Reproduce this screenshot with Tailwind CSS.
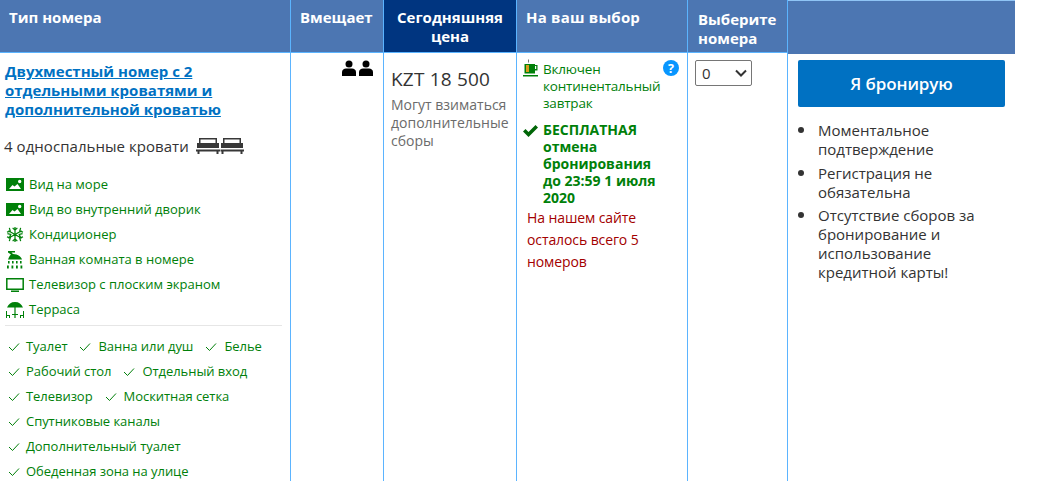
<!DOCTYPE html>
<html lang="ru">
<head>
  <meta charset="UTF-8" />
  <title>Выбор номера</title>
  <script src="https://cdn.jsdelivr.net/npm/@tailwindcss/browser@4"></script>
</head>
<body class="bg-white h-[481px] w-[1041px] overflow-hidden font-['Open_Sans','Noto_Sans',sans-serif] text-[#333]">
  <div class="w-[1015px] h-[481px] grid grid-cols-[291px_93px_133px_171px_100px_227px] grid-rows-[53px_428px]">

    <!-- Header -->
    <div class="bg-[#4c76b2] border-r border-b border-[#5bb4ff] text-white font-bold text-[15px] leading-[19px] pl-[9px] pt-[8px]">Тип номера</div>
    <div class="bg-[#4c76b2] border-r border-b border-[#5bb4ff] text-white font-bold text-[15px] leading-[19px] pl-[9px] pt-[8px]">Вмещает</div>
    <div class="bg-[#003580] border-r border-b border-[#5bb4ff] text-white font-bold text-[15px] leading-[19px] pt-[8px] text-center">Сегодняшняя<br>цена</div>
    <div class="bg-[#4c76b2] border-r border-b border-[#5bb4ff] text-white font-bold text-[15px] leading-[19px] pl-[9px] pt-[8px] tracking-[0.2px]">На ваш выбор</div>
    <div class="bg-[#4c76b2] border-r border-b border-[#5bb4ff] text-white font-bold text-[15px] leading-[19px] pl-[10px] pt-[10px]">Выберите<br>номера</div>
    <div class="bg-[#4c76b2] border-t border-[#8fc4f5] h-[54px]"></div>

    <!-- Room type -->
    <div class="border-r border-[#5bb4ff] pl-[5px] pr-[8px] pt-[9px]">
      <a href="#" class="block text-[#0071c2] underline font-bold text-[15px] leading-[19px]">Двухместный номер с 2 отдельными кроватями и дополнительной кроватью</a>
      <div class="flex items-center gap-[7px] mt-[15px] -ml-[1px] h-[24px] text-[15px] tracking-[0.05px]">
        <span>4 односпальные кровати</span>
        <svg width="48" height="16" viewBox="0 0 48 16" fill="#383838">
          <path d="M3 0h18v1.500H3zM3 1.500h1.500V5H3zM19.500 1.500H21V5h-1.500zM1 5h22v5H1zM0 11.500h24V13.500h-1.500V16h-2v-2.500h-17V16h-2v-2.500H0z"/>
          <path d="M27 0h18v1.500H27zM27 1.500h1.500V5H27zM43.500 1.500H45V5h-1.500zM25 5h22v5H25zM24.500 11.500H48V13.500h-1.500V16h-2v-2.500h-17V16h-2v-2.500h-1z"/>
        </svg>
      </div>

      <ul class="mt-[14px] text-[13px] text-[#008009]">
        <li class="flex items-center gap-[5px] h-[25px]">
          <svg class="ml-[1px]" width="18" height="13" viewBox="0 0 18 13" fill="#008009"><path fill-rule="evenodd" d="M0 0h18v13H0zM3 11h12L11.500 6 8.500 8.500 6.500 7zM12 3.500a1.700 1.700 0 1 0 3.400 0a1.700 1.700 0 1 0-3.400 0z"/></svg>
          Вид на море
        </li>
        <li class="flex items-center gap-[5px] h-[25px]">
          <svg class="ml-[1px]" width="18" height="13" viewBox="0 0 18 13" fill="#008009"><path fill-rule="evenodd" d="M0 0h18v13H0zM3 11h12L11.500 6 8.500 8.500 6.500 7zM12 3.500a1.700 1.700 0 1 0 3.400 0a1.700 1.700 0 1 0-3.400 0z"/></svg>
          Вид во внутренний дворик
        </li>
        <li class="flex items-center gap-[5px] h-[25px]">
          <svg class="ml-[1px]" width="18" height="17" viewBox="0 0 18 18" fill="none" stroke="#008009" stroke-width="1.300"><path d="M9 1v16M2 5l14 8M16 5L2 13M6.500 2l2.500 2.500L11.500 2M6.500 16L9 13.500l2.500 2.500M1 8l3.500 1L3 12.500M17 8l-3.500 1 1.500 3.500M3 2l1 3.500L.5 6.500M15 2l-1 3.500 3.500 1M3 16l1-3.500-3.500-1M15 16l-1-3.500 3.500-1"/></svg>
          Кондиционер
        </li>
        <li class="flex items-center gap-[5px] h-[25px]">
          <svg class="ml-[1px]" width="18" height="18" viewBox="0 0 18 18" fill="#008009"><path d="M2 0h7v1.500H5.500L7 3c4 0 8 2 9 5.500H2C3 6 4 4 5 3.500L2 1.500zM2 10h1.600v2.500H2zM6 10h1.600v2.500H6zM10 10h1.600v2.500H10zM14 10h1.600v2.500H14zM1 14.500h1.800V17.500H1zM5.500 14.500h1.800V17.500H5.500zM10 14.500h1.800V17.500H10zM14.500 14.500h1.800V17.500h-1.800z"/></svg>
          Ванная комната в номере
        </li>
        <li class="flex items-center gap-[5px] h-[25px]">
          <svg class="ml-[1px]" width="18" height="14" viewBox="0 0 18 14" fill="none" stroke="#008009" stroke-width="1.500"><path d="M.8.800h16.400v10.400H.8zM5 13.200h8"/></svg>
          Телевизор с плоским экраном
        </li>
        <li class="flex items-center gap-[5px] h-[25px]">
          <svg class="ml-[1px]" width="18" height="18" viewBox="0 0 18 18" fill="#008009"><path d="M1 6.500C2.500 3 5 1 9 1s6.500 2 8 5.500zM8.400 6.500h1.200V17H8.400zM6 13h6v1H6zM0 10h1v7H0zM1 14h3v3H3v-2H1zM17 10h1v7h-1zM14 14h3v1h-2v2h-1z"/></svg>
          Терраса
        </li>
      </ul>

      <div class="border-t border-[#e6e6e6] mt-[3px] pt-[8px]">
        <ul class="text-[13px] text-[#008009] leading-[25px] tracking-[-0.05px]">
          <li class="flex gap-[12px]">
            <span class="flex items-center gap-[6px]"><svg class="ml-[3px]" width="12" height="10" viewBox="0 0 12 10" fill="none" stroke="#008009"><path d="M1 5l3.500 3.500L11 1.500"/></svg>Туалет</span>
            <span class="flex items-center gap-[7px]"><svg width="12" height="10" viewBox="0 0 12 10" fill="none" stroke="#008009"><path d="M1 5l3.500 3.500L11 1.500"/></svg>Ванна или душ</span>
            <span class="flex items-center gap-[7px]"><svg width="12" height="10" viewBox="0 0 12 10" fill="none" stroke="#008009"><path d="M1 5l3.500 3.500L11 1.500"/></svg>Белье</span>
          </li>
          <li class="flex gap-[12px]">
            <span class="flex items-center gap-[6px]"><svg class="ml-[3px]" width="12" height="10" viewBox="0 0 12 10" fill="none" stroke="#008009"><path d="M1 5l3.500 3.500L11 1.500"/></svg>Рабочий стол</span>
            <span class="flex items-center gap-[7px]"><svg width="12" height="10" viewBox="0 0 12 10" fill="none" stroke="#008009"><path d="M1 5l3.500 3.500L11 1.500"/></svg>Отдельный вход</span>
          </li>
          <li class="flex gap-[12px]">
            <span class="flex items-center gap-[6px]"><svg class="ml-[3px]" width="12" height="10" viewBox="0 0 12 10" fill="none" stroke="#008009"><path d="M1 5l3.500 3.500L11 1.500"/></svg>Телевизор</span>
            <span class="flex items-center gap-[7px]"><svg width="12" height="10" viewBox="0 0 12 10" fill="none" stroke="#008009"><path d="M1 5l3.500 3.500L11 1.500"/></svg>Москитная сетка</span>
          </li>
          <li class="flex items-center gap-[6px]"><svg class="ml-[3px]" width="12" height="10" viewBox="0 0 12 10" fill="none" stroke="#008009"><path d="M1 5l3.500 3.500L11 1.500"/></svg>Спутниковые каналы</li>
          <li class="flex items-center gap-[6px]"><svg class="ml-[3px]" width="12" height="10" viewBox="0 0 12 10" fill="none" stroke="#008009"><path d="M1 5l3.500 3.500L11 1.500"/></svg>Дополнительный туалет</li>
          <li class="flex items-center gap-[6px]"><svg class="ml-[3px]" width="12" height="10" viewBox="0 0 12 10" fill="none" stroke="#008009"><path d="M1 5l3.500 3.500L11 1.500"/></svg>Обеденная зона на улице</li>
        </ul>
      </div>
    </div>

    <!-- Sleeps -->
    <div class="border-r border-[#5bb4ff] flex justify-end items-start pt-[7px] pr-[10px]">
      <svg width="31" height="17" viewBox="0 0 31 17" fill="#000">
        <circle cx="7" cy="4" r="3.500"/><path d="M0 16v-4c0-2 2-3.500 4-3.500h6c2 0 4 1.500 4 3.500v4z"/>
        <circle cx="24" cy="4" r="3.500"/><path d="M17 16v-4c0-2 2-3.500 4-3.500h6c2 0 4 1.500 4 3.500v4z"/>
      </svg>
    </div>

    <!-- Price -->
    <div class="border-r border-[#5bb4ff] pl-[7px] pt-[14px]">
      <div class="text-[19px] leading-[24px] font-medium tracking-[0.2px] text-[#333]">KZT 18 500</div>
      <div class="text-[14px] leading-[18px] text-[#6b6b6b] mt-[5px]">Могут взиматься дополнительные сборы</div>
    </div>

    <!-- Choices -->
    <div class="border-r border-[#5bb4ff] relative pl-[6px] pt-[6px]">
      <svg class="absolute right-[8px] top-[7px]" width="16" height="16" viewBox="0 0 16 16"><circle cx="8" cy="8" r="8" fill="#0896ff"/><text x="8" y="12.500" text-anchor="middle" font-size="12.500" font-weight="700" fill="#fff" font-family="Open Sans">?</text></svg>
      <div class="flex gap-[4px] text-[13.500px] leading-[17px] text-[#008009] tracking-[-0.2px]">
        <svg class="shrink-0" width="16" height="19" viewBox="0 0 16 19" fill="#008009">
          <path d="M5 0.500h1v3H5z" fill="#777"/>
          <path d="M1.500 5h10.500v1h2.500v5.500H12v3H1.500zM12 7v3h1.200V7z"/>
          <path d="M3 6h3v7H3z" fill="#d99a1c"/>
          <path d="M0 16h15v1.500H0z"/>
        </svg>
        <span class="w-[125px] mt-[2px]">Включен континентальный завтрак</span>
      </div>
      <div class="flex gap-[5px] mt-[9px] text-[14px] leading-[17px] font-bold text-[#008009]">
        <svg class="mt-[3px] shrink-0" width="15" height="13" viewBox="0 0 15 13" fill="#006607"><path d="M0 7.500L2.500 5l3 3L12.500 1 15 3.500 5.500 13z"/></svg>
        <span class="w-[118px]">БЕСПЛАТНАЯ отмена бронирования до 23:59 1 июля 2020</span>
      </div>
      <div class="ml-[4px] mt-[1px] text-[14px] leading-[22px] text-[#a30000] tracking-[-0.1px] w-[130px]">На нашем сайте осталось всего 5 номеров</div>
    </div>

    <!-- Select -->
    <div class="border-r border-[#5bb4ff] pl-[7px] pt-[7px]">
      <div class="w-[57px] h-[26px] border border-[#767676] rounded-[2px] flex items-center justify-between pl-[6px] pr-[4px] text-[15px]">
        <span>0</span>
        <svg width="12" height="8" viewBox="0 0 12 8" fill="none" stroke="#333" stroke-width="2"><path d="M1 1.500l5 5 5-5"/></svg>
      </div>
    </div>

    <!-- Book -->
    <div class="pl-[10px] pr-[10px] pt-[7px]">
      <button class="w-[207px] h-[47px] bg-[#0071c2] rounded-[2px] text-white font-semibold text-[17px] tracking-[-0.1px]">Я бронирую</button>
      <ul class="mt-[14px] pr-[8px] text-[15px] leading-[19px] space-y-[4.500px]">
        <li class="flex gap-[14px]"><span class="w-[6px] h-[6px] mt-[6px] rounded-full bg-[#333] shrink-0"></span><span>Моментальное подтверждение</span></li>
        <li class="flex gap-[14px]"><span class="w-[6px] h-[6px] mt-[6px] rounded-full bg-[#333] shrink-0"></span><span>Регистрация не обязательна</span></li>
        <li class="flex gap-[14px]"><span class="w-[6px] h-[6px] mt-[6px] rounded-full bg-[#333] shrink-0"></span><span>Отсутствие сборов за бронирование и использование кредитной карты!</span></li>
      </ul>
    </div>
  </div>
</body>
</html>
